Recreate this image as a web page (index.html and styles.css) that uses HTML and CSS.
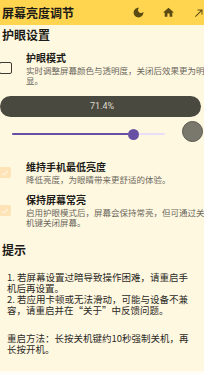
FILE: index.html
```html
<!DOCTYPE html>
<html lang="zh">
<head>
<meta charset="utf-8">
<link rel="stylesheet" href="styles.css">
</head>
<body>
<header class="topbar">
  <div class="title">屏幕亮度调节</div>
  <div class="actions">
    <svg class="ico moon" viewBox="0 0 24 24"><path d="M12 3c-4.97 0-9 4.030-9 9s4.03 9 9 9 9-4.03 9-9c0-.46-.04-.92-.1-1.36-.98 1.37-2.58 2.26-4.4 2.260-2.98 0-5.4-2.42-5.4-5.4 0-1.81.89-3.42 2.26-4.4-.44-.06-.9-.1-1.36-.1z"/></svg>
    <svg class="ico home" viewBox="0 0 24 24"><path d="M10 20v-6h4v6h5v-8h3L12 3 2 12h3v8z"/></svg>
    <svg class="ico arrow" viewBox="0 0 24 24"><path d="M9 5v2h6.59L4 18.59 5.41 20 17 8.41V15h2V5z"/></svg>
  </div>
</header>
<main class="page">
  <div class="section-title">护眼设置</div>
  <div class="option first">
    <span class="box empty"></span>
    <div class="opt-text">
      <div class="opt-title">护眼模式</div>
      <div class="opt-desc">实时调整屏幕颜色与透明度，关闭后效果更为明显。</div>
    </div>
  </div>
  <div class="pill">71.4%</div>
  <div class="slider-row">
    <div class="slider">
      <span class="track-on"></span>
      <span class="thumb"></span>
      <span class="track-off"></span>
    </div>
    <span class="knob"></span>
  </div>
  <div class="option">
    <span class="box checked"><svg viewBox="0 0 24 24"><path d="M5 12.5l4.5 4.5L19 7.5"/></svg></span>
    <div class="opt-text">
      <div class="opt-title">维持手机最低亮度</div>
      <div class="opt-desc">降低亮度，为眼睛带来更舒适的体验。</div>
    </div>
  </div>
  <div class="option second">
    <span class="box checked"><svg viewBox="0 0 24 24"><path d="M5 12.5l4.5 4.5L19 7.5"/></svg></span>
    <div class="opt-text">
      <div class="opt-title">保持屏幕常亮</div>
      <div class="opt-desc">启用护眼模式后，屏幕会保持常亮，但可通过关机键关闭屏幕。</div>
    </div>
  </div>
  <div class="section-title tips-title">提示</div>
  <div class="tips">
    <p>1. 若屏幕设置过暗导致操作困难，请重启手机后再设置。<br>2. 若应用卡顿或无法滑动，可能与设备不兼容，请重启并在“关于”中反馈问题。</p>
    <p class="restart">重启方法：长按关机键约10秒强制关机，再长按开机。</p>
  </div>
  <div class="next-card"></div>
</main>
</body>
</html>
```
FILE: styles.css
```css
html, body {
  margin: 0;
  padding: 0;
}
body {
  width: 204px;
  height: 374px;
  overflow: hidden;
  background: #fff8e1;
  font-family: "Noto Sans CJK SC", "Noto Sans", sans-serif;
  color: #1c1b17;
}
.topbar {
  height: 25px;
  background: #ffd54f;
  display: flex;
  align-items: center;
  padding-left: 2px;
}
.title {
  font-size: 12px;
  font-weight: 700;
  line-height: 14px;
  white-space: nowrap;
}
.actions {
  margin-left: auto;
  display: flex;
  align-items: center;
  margin-right: -1px;
}
.ico {
  fill: #5b4a14;
  display: block;
}
.moon {
  width: 13px;
  height: 13px;
}
.home {
  width: 13px;
  height: 13px;
  margin-left: 17px;
}
.arrow {
  width: 12px;
  height: 12px;
  margin-left: 18px;
}
.page {
  display: flex;
  flex-direction: column;
}
.section-title {
  font-size: 12px;
  font-weight: 700;
  line-height: 14px;
  padding-left: 2px;
  margin-top: 3px;
}
.option {
  display: flex;
  align-items: center;
  margin-top: 14px;
}
.option.first {
  margin-top: 10px;
}
.option.second {
  margin-top: 10px;
}
.box {
  flex: none;
  width: 13px;
  height: 12px;
  margin-left: -1px;
  margin-right: 14px;
  box-sizing: border-box;
  border-radius: 2px;
}
.box.empty {
  border: 1.5px solid #3c3a33;
  margin-top: -2px;
}
.box.checked {
  width: 12px;
  height: 11px;
  margin-right: 15px;
  background: #fde3b6;
  display: flex;
  align-items: center;
  justify-content: center;
}
.box.checked svg {
  width: 10px;
  height: 10px;
  fill: none;
  stroke: #fff5e2;
  stroke-width: 2.6;
}
.opt-text {
  width: 182px;
  flex: none;
}
.opt-title {
  font-size: 10px;
  font-weight: 700;
  line-height: 12px;
  white-space: nowrap;
}
.opt-desc {
  font-size: 8.5px;
  line-height: 10px;
  color: #6a675c;
  margin-top: 1px;
}
.pill {
  margin-top: 11px;
  width: 201px;
  height: 21px;
  border-radius: 10.5px;
  background: #4a4940;
  color: #dedbcf;
  font-family: Roboto, "Noto Sans", sans-serif;
  font-size: 9px;
  line-height: 21px;
  text-align: center;
  padding-left: 3px;
  box-sizing: border-box;
}
.slider-row {
  display: flex;
  align-items: flex-start;
  margin-top: 4px;
  height: 26px;
}
.slider {
  margin-left: 12px;
  width: 153px;
  height: 26px;
  display: flex;
  align-items: center;
}
.track-on {
  width: 116px;
  height: 2.5px;
  background: #6750a4;
  border-radius: 2px 0 0 2px;
}
.thumb {
  width: 11px;
  height: 11px;
  border-radius: 50%;
  background: #6750a4;
  flex: none;
}
.track-off {
  flex: 1;
  height: 2.5px;
  background: #e8def8;
  border-radius: 0 2px 2px 0;
}
.knob {
  margin-left: 17px;
  width: 21px;
  height: 21px;
  box-sizing: border-box;
  border-radius: 50%;
  background: #7a786d;
  border: 1px solid #56554c;
  flex: none;
}
.tips-title {
  margin-top: 16px;
}
.tips {
  padding: 15px 7px 0 7px;
  font-size: 9.5px;
  line-height: 11px;
  color: #2b2a25;
}
.tips p {
  margin: 0;
}
.tips .restart {
  margin-top: 17px;
}
.next-card {
  margin-top: 16px;
  height: 3px;
  background: #fffdf6;
}
```
